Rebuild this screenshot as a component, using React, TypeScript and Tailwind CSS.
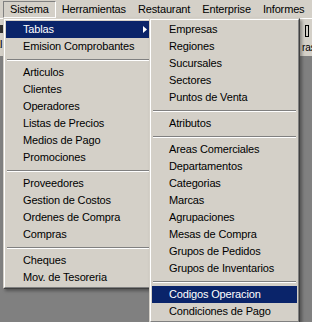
import React from 'react';

type Entry = { label: string; sep?: false; active?: boolean; arrow?: boolean } | { sep: true };

const MAIN: Entry[] = [
  { label: 'Tablas', active: true, arrow: true },
  { label: 'Emision Comprobantes' },
  { sep: true },
  { label: 'Articulos' },
  { label: 'Clientes' },
  { label: 'Operadores' },
  { label: 'Listas de Precios' },
  { label: 'Medios de Pago' },
  { label: 'Promociones' },
  { sep: true },
  { label: 'Proveedores' },
  { label: 'Gestion de Costos' },
  { label: 'Ordenes de Compra' },
  { label: 'Compras' },
  { sep: true },
  { label: 'Cheques' },
  { label: 'Mov. de Tesoreria' },
];

const SUB: Entry[] = [
  { label: 'Empresas' },
  { label: 'Regiones' },
  { label: 'Sucursales' },
  { label: 'Sectores' },
  { label: 'Puntos de Venta' },
  { sep: true },
  { label: 'Atributos' },
  { sep: true },
  { label: 'Areas Comerciales' },
  { label: 'Departamentos' },
  { label: 'Categorias' },
  { label: 'Marcas' },
  { label: 'Agrupaciones' },
  { label: 'Mesas de Compra' },
  { label: 'Grupos de Pedidos' },
  { label: 'Grupos de Inventarios' },
  { sep: true },
  { label: 'Codigos Operacion', active: true },
  { label: 'Condiciones de Pago' },
];

const TOP = ['Sistema', 'Herramientas', 'Restaurant', 'Enterprise', 'Informes'];

const font = "font-['Liberation_Sans',Arial,sans-serif] text-[11px] tracking-[-0.15px]";

function Menu({ items, className }: { items: Entry[]; className: string }) {
  return (
    <div
      className={`absolute bg-[#d4d0c8] border border-t-[#d4d0c8] border-l-[#d4d0c8] border-r-[#404040] border-b-[#404040] shadow-[2px_2px_3px_rgba(0,0,0,0.35)] ${className}`}
    >
      <div className="border border-t-white border-l-white border-r-[#808080] border-b-[#808080] p-px">
        {items.map((it, i) =>
          it.sep ? (
            <div key={i} className="h-[9px] flex flex-col justify-center px-px">
              <div className="h-px bg-[#808080]" />
              <div className="h-px bg-white" />
            </div>
          ) : (
            <div
              key={i}
              className={`relative h-[17px] flex items-center pl-[17px] whitespace-nowrap ${
                it.active ? 'bg-[#0a246a] text-white' : 'text-black'
              }`}
            >
              {it.label}
              {it.arrow && (
                <svg className="absolute right-[3px] top-[5px]" width="4" height="7" viewBox="0 0 4 7">
                  <path d="M0 0 L4 3.5 L0 7 Z" fill={it.active ? '#fff' : '#000'} />
                </svg>
              )}
            </div>
          )
        )}
      </div>
    </div>
  );
}

export default function App() {
  return (
    <div className={`relative w-[312px] h-[322px] overflow-hidden bg-[#808080] ${font}`}>
      <div className="h-[18px] bg-[#d4d0c8] flex items-start pl-[3px] pt-px">
        {TOP.map((t, i) => (
          <div
            key={t}
            className={`h-[17px] flex items-center px-[6px] whitespace-nowrap ${
              i === 0 ? 'border border-t-[#808080] border-l-[#808080] border-r-white border-b-white px-[5px]' : ''
            }`}
          >
            {t}
          </div>
        ))}
      </div>
      <div className="h-[38px] bg-[#d4d0c8] flex justify-between border-t border-white">
        <div className="flex flex-col -ml-[6px] pt-[6px]">
          <div className="w-[9px] h-[8px] bg-[#303030]" />
          <span className="mt-[6px] leading-none">al</span>
        </div>
        <div className="flex flex-col items-start -mr-[8px] pt-[6px] w-[18px]">
          <div className="ml-[3px] w-[4px] h-[12px] border border-black" />
          <span className="mt-[6px] leading-none text-[10px]">ras</span>
        </div>
      </div>

      <Menu items={MAIN} className="left-[3px] top-[18px] w-[150px]" />
      <Menu items={SUB} className="left-[149px] top-[18px] w-[151px]" />
    </div>
  );
}
